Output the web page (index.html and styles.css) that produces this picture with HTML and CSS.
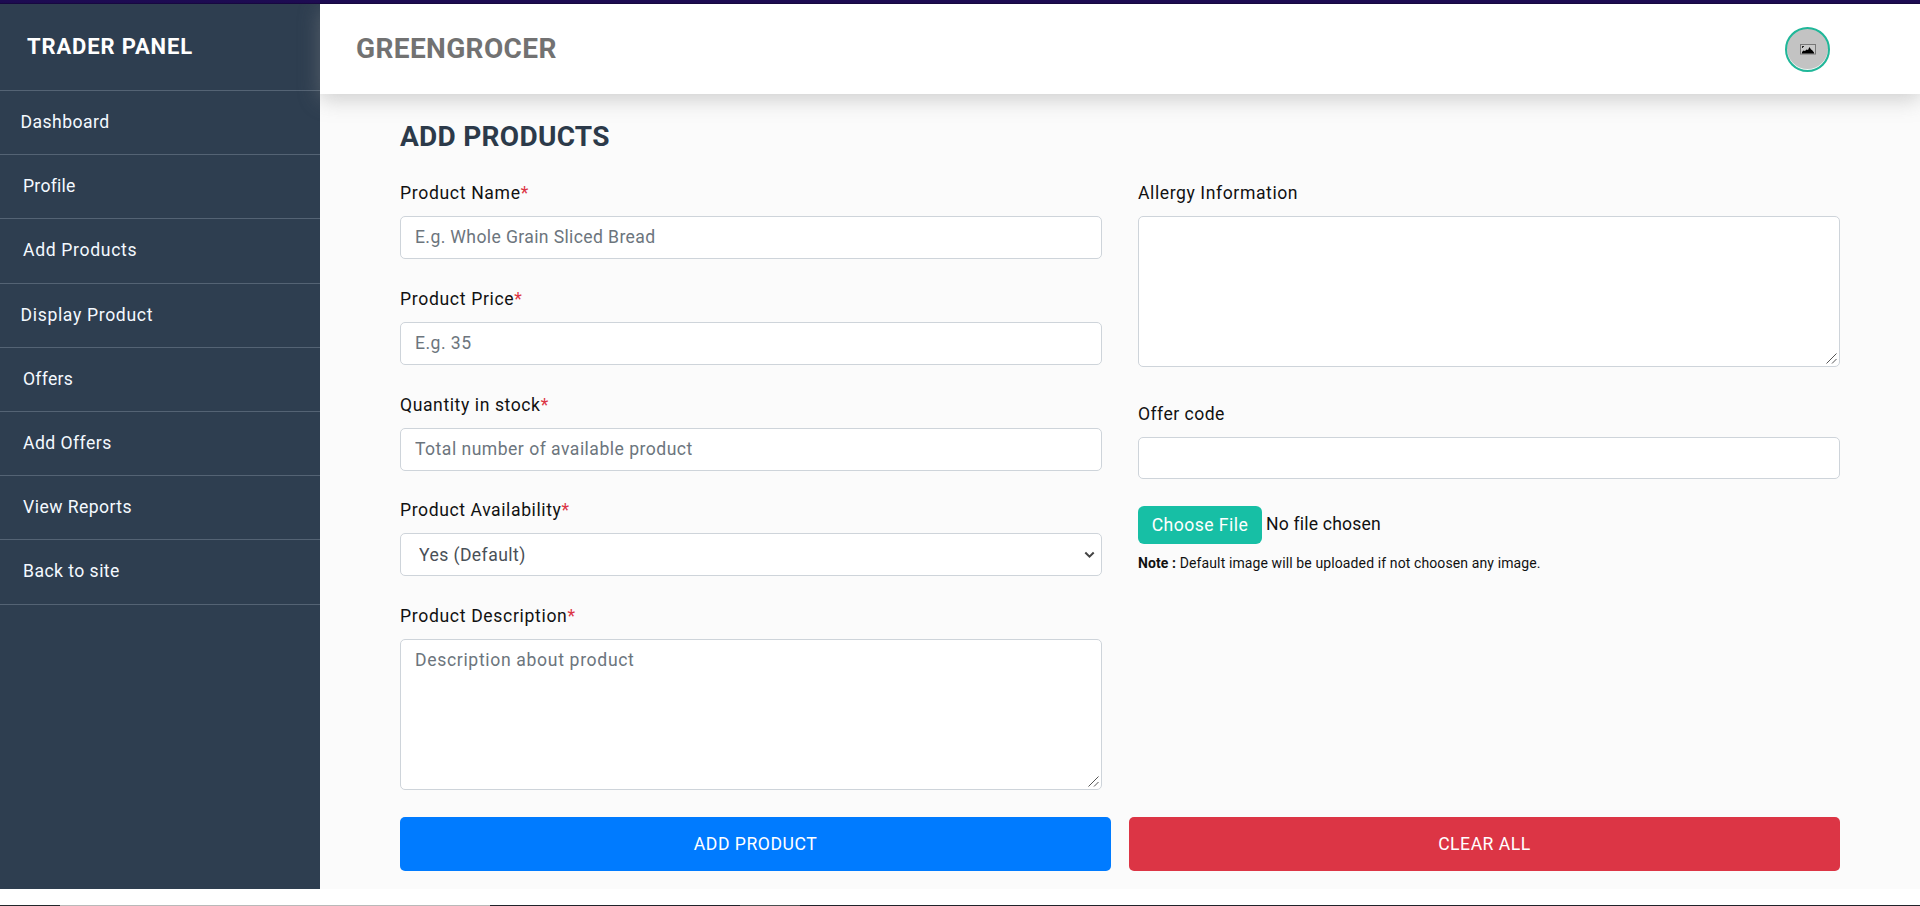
FILE: index.html
```html
<!DOCTYPE html>
<html lang="en">
<head>
<meta charset="utf-8">
<title>Trader Panel</title>
<link rel="stylesheet" href="styles.css">
</head>
<body>
<div class="top-strip"></div>
<div class="shell">
  <aside class="sidebar">
    <div class="brand">TRADER PANEL</div>
    <nav class="nav">
      <a class="nav-link out">Dashboard</a>
      <a class="nav-link tight">Profile</a>
      <a class="nav-link wide">Add Products</a>
      <a class="nav-link out wide">Display Product</a>
      <a class="nav-link tight">Offers</a>
      <a class="nav-link">Add Offers</a>
      <a class="nav-link">View Reports</a>
      <a class="nav-link">Back to site</a>
    </nav>
  </aside>
  <div class="page">
    <header class="header">
      <span class="shop">GREENGROCER</span>
      <div class="avatar">
        <svg width="16" height="11" viewBox="0 0 16 11"><rect x=".5" y=".5" width="15" height="9.5" fill="#c9c9c9" stroke="#777"/><path d="M2 9.5V8l1.500-1.500L5 7l1.500-1.500L8 6l1.500-3L11 5.500l1 .5 2 2.500v1z" fill="#000"/><path d="M2 2h2v1H3v1H2z" fill="#222"/></svg>
      </div>
    </header>
    <main class="content">
      <h1 class="title">ADD PRODUCTS</h1>
      <div class="columns">
        <div class="column">
          <div class="field"><label class="label wide">Product Name<i class="req">*</i></label><input class="control whole" placeholder="E.g. Whole Grain Sliced Bread"></div>
          <div class="field"><label class="label wide">Product Price<i class="req">*</i></label><input class="control" placeholder="E.g. 35"></div>
          <div class="field"><label class="label stock">Quantity in stock<i class="req">*</i></label><input class="control" placeholder="Total number of available product"></div>
          <div class="field"><label class="label stock">Product Availability<i class="req">*</i></label>
            <div class="holder"><select class="control select"><option>Yes (Default)</option></select><svg class="chevron" width="11" height="8" viewBox="0 0 11 8"><path d="M1.300 1.500 5.500 5.700 9.700 1.500" fill="none" stroke="#444" stroke-width="2"/></svg></div>
          </div>
          <div class="field last"><label class="label wide">Product Description<i class="req">*</i></label>
            <div class="holder"><textarea class="control area wide" placeholder="Description about product"></textarea><svg class="grip" width="13" height="13" viewBox="0 0 13 13"><path d="M1.500 11.500 11.500 1.500M7 11.500l4.500-4.500" stroke="#555" fill="none"/></svg></div>
          </div>
        </div>
        <div class="column">
          <div class="field allergy"><label class="label stock">Allergy Information</label>
            <div class="holder"><textarea class="control area"></textarea><svg class="grip" width="13" height="13" viewBox="0 0 13 13"><path d="M1.500 11.500 11.500 1.500M7 11.500l4.500-4.500" stroke="#555" fill="none"/></svg></div>
          </div>
          <div class="field offer"><label class="label">Offer code</label><input class="control short"></div>
          <div class="file"><span class="choose">Choose File</span><span class="chosen">No file chosen</span></div>
          <p class="note"><b>Note :</b> Default image will be uploaded if not choosen any image.</p>
        </div>
      </div>
      <div class="actions">
        <button class="button add">ADD PRODUCT</button>
        <button class="button clear">CLEAR ALL</button>
      </div>
    </main>
  </div>
</div>
<div class="bottom-strip"></div>
</body>
</html>
```
FILE: styles.css
```css
* { box-sizing: border-box; }
body {
  margin: 0;
  height: 906px;
  display: flex;
  flex-direction: column;
  overflow: hidden;
  background: #fff;
  font: 17.6px/26.4px Roboto, "Liberation Sans", sans-serif;
  letter-spacing: .45px;
  color: #212529;
}
.top-strip { height: 4px; flex: none; background: linear-gradient(#1d0b52 60%, #140638); }
.shell { height: 885px; flex: none; display: flex; }
.sidebar { width: 320px; flex: none; background: #2e3e50; color: #fff; }
.brand {
  height: 87px;
  padding: 30px 27px 0;
  border-bottom: 1px solid #546374;
  font-weight: 700;
  font-size: 22px;
  letter-spacing: .85px;
}
.nav { display: flex; flex-direction: column; }
.nav-link {
  height: 64.2px;
  padding: 18px 23px 0;
  border-bottom: 1px solid #546374;
  color: #f4f9ff;
}
.nav-link.out { padding-left: 20.5px; }
.tight { letter-spacing: .25px; }
.page { flex: 1; display: flex; flex-direction: column; background: #fbfbfb; }
.header {
  height: 90px;
  flex: none;
  display: flex;
  align-items: center;
  justify-content: space-between;
  padding: 0 90px 0 36px;
  background: #fff;
  box-shadow: 0 5px 20px rgba(140, 140, 140, .42);
  clip-path: inset(0 0 -40px -40px);
}
.shop { padding-top: 1px; font-size: 28px; font-weight: 700; letter-spacing: .37px; color: #727272; }
.avatar {
  width: 45px;
  height: 45px;
  display: flex;
  align-items: center;
  justify-content: center;
  border: 2px solid #20b799;
  border-radius: 50%;
  background: #c3c3c3;
  box-shadow: inset 0 -1px 0 #eefaf7;
}
.content { padding: 24px 80px 0; }
.title { margin: 0 0 24px; font-size: 28px; line-height: 38px; font-weight: 700; letter-spacing: .28px; color: #2c3a4a; }
.columns { display: flex; gap: 36px; }
.column { flex: 1; min-width: 0; }
.field { height: 105.75px; }
.label { display: block; height: 36px; color: #111; }
.req { color: #dc3545; font-style: normal; }
.holder { position: relative; }
.control {
  display: block;
  width: 100%;
  height: 43px;
  margin: 0;
  padding: 6px 14px;
  border: 1px solid #ced4da;
  border-radius: 5px;
  background: #fff;
  color: #495057;
  font: inherit;
  letter-spacing: .47px;
}
.wide, .control.wide { letter-spacing: .66px; }
.stock { letter-spacing: .58px; }
.control.whole { letter-spacing: .37px; padding-bottom: 7px; }
.control.short { height: 42px; }
.control::placeholder { color: #6c757d; opacity: 1; }
.select { padding-left: 18px; letter-spacing: .42px; appearance: none; }
.chevron { position: absolute; right: 7px; top: 18px; }
.area { height: 151px; padding-top: 7px; resize: none; }
.grip { position: absolute; right: 2px; bottom: 2px; }
.last { height: 214px; }
.allergy { height: 221px; }
.offer { height: 105px; }
.file { display: flex; height: 38px; gap: 4px; }
.choose {
  width: 124px;
  border-radius: 6px;
  background: #17bfa5;
  color: #fff;
  text-align: center;
  line-height: 38px;
}
.chosen { line-height: 36px; letter-spacing: .18px; color: #111; }
.note { margin: 6px 0 0; font-size: 14px; letter-spacing: .11px; color: #111; }
.actions { display: flex; gap: 18px; }
.button {
  flex: 1;
  height: 54px;
  border: 0;
  border-radius: 5px;
  color: #fff;
  font: inherit;
  letter-spacing: .52px;
}
.add { background: #007bff; }
.clear { background: #dc3545; }
.bottom-strip {
  height: 1px;
  flex: none;
  margin-top: 16px;
  background: linear-gradient(90deg, #22272b 60px, #b9b9b9 60px 490px, #20232a 490px 740px, #4a4f50 740px 800px, #20232a 800px);
}
```
